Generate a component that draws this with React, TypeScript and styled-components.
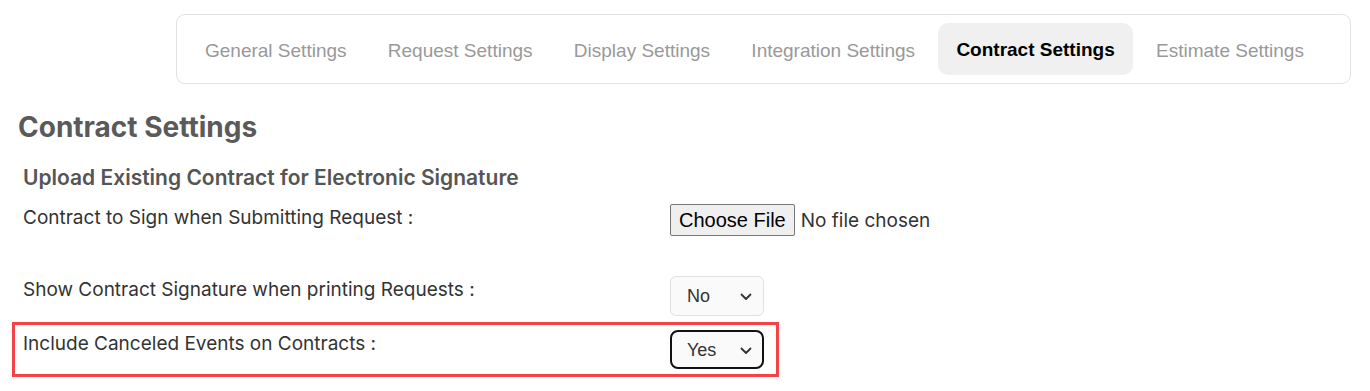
import React from "react";
import styled, { createGlobalStyle } from "styled-components";

const Global = createGlobalStyle`
  html, body { margin: 0; padding: 0; background: #fff; }
  body { font-family: Inter, "Noto Sans", sans-serif; color: #333; }
  * { box-sizing: border-box; }
`;

const Page = styled.div`
  width: 1370px;
  height: 391px;
  overflow: hidden;
  padding: 14px 19px 0 12px;
`;

const TabBarWrap = styled.div`
  display: flex;
  justify-content: flex-end;
`;

const TabBar = styled.nav`
  display: flex;
  align-items: center;
  gap: 5.3px;
  width: 1175px;
  height: 70px;
  padding: 0 10px;
  border: 1px solid #e2e2e2;
  border-radius: 9px;
  background: #fff;
`;

const Tab = styled.div<{ $active?: boolean }>`
  display: flex;
  align-items: center;
  height: 52px;
  padding: ${(p) => (p.$active ? "1px" : "3px")} 18px 0;
  border-radius: 10px;
  font-family: "Liberation Sans", Arial, sans-serif;
  font-size: 19px;
  font-weight: ${(p) => (p.$active ? 700 : 400)};
  color: ${(p) => (p.$active ? "#000" : "#999")};
  background: ${(p) => (p.$active ? "#f0f0f0" : "transparent")};
  white-space: nowrap;
`;

const Heading = styled.h1`
  margin: 26px 0 0 6px;
  font-size: 28px;
  line-height: 34px;
  font-weight: 700;
  color: #5a5a5a;
`;

const SubHeading = styled.h2`
  margin: 22px 0 0 11px;
  font-size: 21px;
  line-height: 24px;
  font-weight: 600;
  color: #555;
`;

const Rows = styled.div`
  display: flex;
  flex-direction: column;
  padding-top: 6px;
`;

const Row = styled.div<{ $highlight?: boolean; $space?: number }>`
  display: flex;
  align-items: flex-start;
  width: 767px;
  margin-top: ${(p) => p.$space ?? 0}px;
  padding: 5px 12px ${(p) => (p.$highlight ? 5 : 3)}px 8px;
  border: 3px solid ${(p) => (p.$highlight ? "#f44346" : "transparent")};
`;

const Label = styled.div`
  width: 647px;
  flex: none;
  padding-top: 3px;
  font-size: 19px;
  line-height: 22px;
  color: #333;
`;

const FileInput = styled.input`
  font-family: Inter, sans-serif;
  font-size: 19px;
  color: #333;
  &::file-selector-button {
    font-family: "Liberation Sans", Arial, sans-serif;
    font-size: 20px;
    color: #000;
    height: 32px;
    padding: 0 8px;
    margin-right: 6px;
    background: #efefef;
    border: 1px solid #767676;
    border-radius: 2px;
  }
`;

const SelectWrap = styled.div`
  position: relative;
  width: 94px;
  flex: none;
`;

const Select = styled.select<{ $focused?: boolean }>`
  appearance: none;
  width: 94px;
  height: ${(p) => (p.$focused ? 39 : 40)}px;
  padding: 0 24px 0 ${(p) => (p.$focused ? 15 : 16)}px;
  font-family: "Liberation Sans", Arial, sans-serif;
  font-size: 18px;
  color: #333;
  background: #fafafa;
  border: ${(p) => (p.$focused ? "2px solid #111" : "1px solid #e0e0e0")};
  border-radius: ${(p) => (p.$focused ? 8 : 6)}px;
  outline: none;
`;

const Chevron = styled.svg`
  position: absolute;
  right: 12px;
  top: 50%;
  width: 12px;
  height: 8px;
  margin-top: -3px;
  pointer-events: none;
`;

const Arrow = () => (
  <Chevron viewBox="0 0 12 8">
    <path d="M1.5 1.5 L6 6 L10.5 1.5" fill="none" stroke="#333" strokeWidth="1.8" strokeLinecap="round" strokeLinejoin="round" />
  </Chevron>
);

const tabs = [
  "General Settings",
  "Request Settings",
  "Display Settings",
  "Integration Settings",
  "Contract Settings",
  "Estimate Settings",
];

export default function App() {
  return (
    <>
      <Global />
      <Page>
        <TabBarWrap>
          <TabBar>
            {tabs.map((t) => (
              <Tab key={t} $active={t === "Contract Settings"}>
                {t}
              </Tab>
            ))}
          </TabBar>
        </TabBarWrap>
        <Heading>Contract Settings</Heading>
        <SubHeading>Upload Existing Contract for Electronic Signature</SubHeading>
        <Rows>
          <Row $space={0}>
            <Label>Contract to Sign when Submitting Request :</Label>
            <FileInput type="file" />
          </Row>
          <Row $space={26}>
            <Label>Show Contract Signature when printing Requests :</Label>
            <SelectWrap>
              <Select defaultValue="No">
                <option>No</option>
                <option>Yes</option>
              </Select>
              <Arrow />
            </SelectWrap>
          </Row>
          <Row $highlight>
            <Label>Include Canceled Events on Contracts :</Label>
            <SelectWrap>
              <Select $focused defaultValue="Yes">
                <option>No</option>
                <option>Yes</option>
              </Select>
              <Arrow />
            </SelectWrap>
          </Row>
        </Rows>
      </Page>
    </>
  );
}
